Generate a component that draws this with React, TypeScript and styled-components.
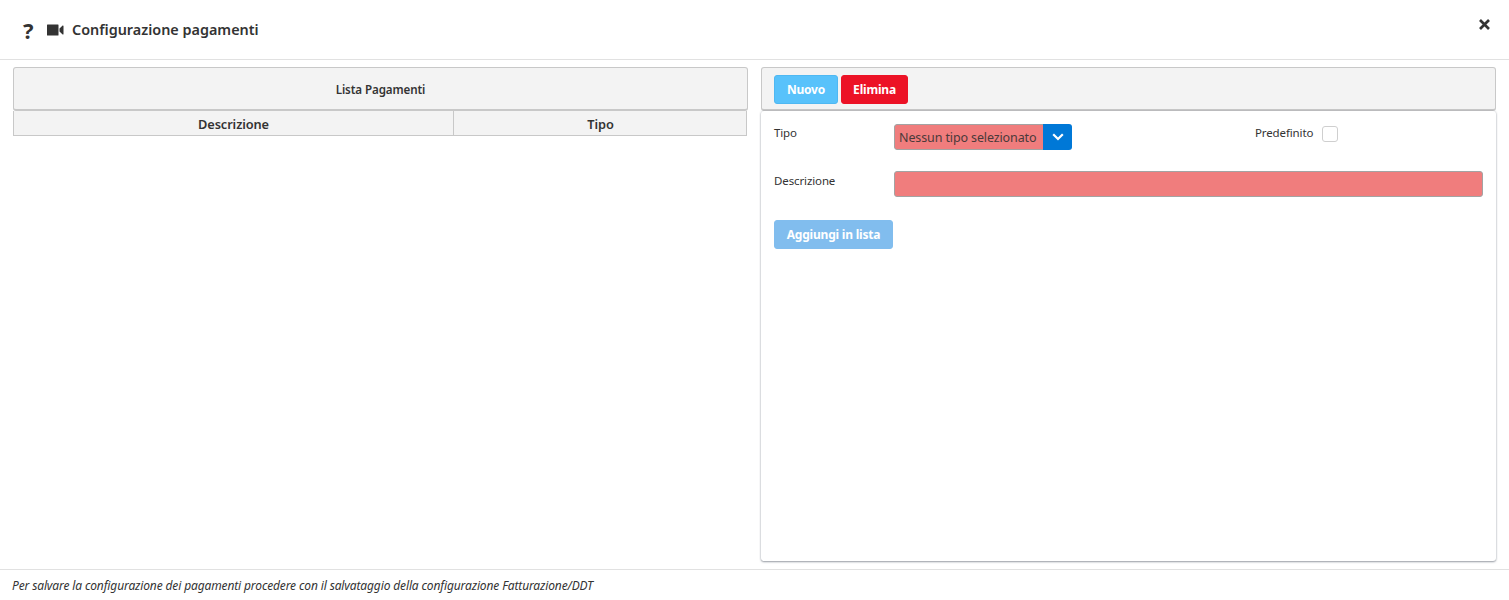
import React from "react";
import styled, { createGlobalStyle } from "styled-components";

const Global = createGlobalStyle`
  html, body { margin: 0; padding: 0; background: #fff; }
  body { font-family: "Noto Sans", "Open Sans", "Liberation Sans", sans-serif; color: #333; }
  * { box-sizing: border-box; }
`;

const Dialog = styled.div`
  width: 1509px;
  height: 600px;
  display: flex;
  flex-direction: column;
  background: #fff;
  overflow: hidden;
`;

const Header = styled.header`
  height: 60px;
  flex: none;
  border-bottom: 1px solid #e1e1e1;
  display: flex;
  align-items: flex-start;
  padding: 0 19px 0 22px;
`;

const HeaderIcon = styled.span`
  display: flex;
  align-items: center;
  color: #333;
`;

const HelpIcon = styled(HeaderIcon)`
  width: 25px;
  height: 60px;
  font-size: 22px;
  font-weight: 700;
  padding: 0 0 1px 1px;
`;

const VideoIcon = styled(HeaderIcon)`
  height: 60px;
  width: 25px;
`;

const Title = styled.h1`
  margin: 0;
  line-height: 59px;
  font-size: 14.4px;
  font-weight: 600;
  color: #333;
  flex: 1;
`;

const Close = styled.span`
  display: flex;
  margin-top: 19px;
  color: #333;
`;

const Body = styled.main`
  flex: 1;
  min-height: 0;
  display: grid;
  grid-template-columns: 735px 735px;
  column-gap: 13px;
  padding: 7px 13px 8px;
`;

const Column = styled.section`
  display: flex;
  flex-direction: column;
  min-height: 0;
`;

const Bar = styled.div`
  height: 44px;
  flex: none;
  background: #f3f3f3;
  border: 1px solid #c8c8c8;
  border-bottom-width: 2px;
  border-radius: 3px;
`;

const TitleBar = styled(Bar)`
  display: flex;
  align-items: center;
  justify-content: center;
  font-size: 11.6px;
  font-weight: 600;
  letter-spacing: -0.1px;
  padding-top: 1px;
`;

const ToolBar = styled(Bar)`
  display: flex;
  align-items: flex-start;
  gap: 3px;
  padding: 7px 12px 0;
`;

const Grid = styled.div`
  display: grid;
  grid-template-columns: 440px 293px;
  height: 25px;
  margin-right: 1px;
  background: #f3f3f3;
  border: 1px solid #c8c8c8;
  border-top: 0;
`;

const HeadCell = styled.div<{ $divider?: boolean }>`
  display: flex;
  align-items: center;
  justify-content: center;
  font-size: 12.8px;
  font-weight: 600;
  letter-spacing: -0.1px;
  color: #333;
  padding-top: 1px;
  border-right: ${(p) => (p.$divider ? "1px solid #c8c8c8" : "0")};
`;

const Button = styled.button<{ $bg: string; $w: number; $border?: string }>`
  width: ${(p) => p.$w}px;
  height: 29px;
  padding: 0;
  border: 1px solid ${(p) => p.$border ?? p.$bg};
  border-radius: 3px;
  background: ${(p) => p.$bg};
  color: #fff;
  font-family: inherit;
  font-size: 12px;
  font-weight: 700;
  letter-spacing: -0.2px;
`;

const Card = styled.div`
  flex: 1;
  min-height: 0;
  background: #fff;
  border-radius: 3px;
  box-shadow: 0 1px 2px 0 rgba(60, 70, 85, 0.5), 0 0 2px 0 rgba(60, 70, 85, 0.2);
  padding: 10px 13px 0 13px;
  display: flex;
  flex-direction: column;
`;

const FieldRow = styled.div<{ $h: number }>`
  display: flex;
  align-items: flex-start;
  height: ${(p) => p.$h}px;
`;

const Label = styled.label<{ $w: number }>`
  width: ${(p) => p.$w}px;
  flex: none;
  font-size: 11.5px;
  line-height: 16px;
  letter-spacing: -0.12px;
  color: #333;
  margin-top: 4px;
`;

const SelectBox = styled.div`
  width: 178px;
  height: 26px;
  margin-top: 3px;
  display: flex;
  border-radius: 3px;
  overflow: hidden;
  flex: none;
`;

const SelectValue = styled.div`
  flex: 1;
  background: #f07d7d;
  border: 1px solid #a3a3a3;
  border-right: 0;
  border-radius: 3px 0 0 3px;
  font-size: 12.5px;
  line-height: 26px;
  padding-left: 4px;
  letter-spacing: -0.12px;
  color: #4a3a3a;
  white-space: nowrap;
  overflow: hidden;
`;

const SelectArrow = styled.div`
  width: 29px;
  flex: none;
  background: #0078d7;
  color: #fff;
  display: flex;
  align-items: center;
  justify-content: center;
`;

const SelectSpacer = styled.div`
  width: 183px;
  flex: none;
`;

const Check = styled.span`
  width: 16px;
  height: 16px;
  flex: none;
  margin: 5px 0 0 9px;
  border: 1px solid #cfcfcf;
  border-radius: 3px;
  background: #fff;
`;

const TextInput = styled.div`
  flex: 1;
  height: 26px;
  margin-top: 2px;
  background: #f07d7d;
  border: 1px solid #a3a3a3;
  border-radius: 3px;
`;

const AddRow = styled.div`
  margin-top: 2px;
  display: flex;
`;

const Footer = styled.footer`
  height: 31px;
  flex: none;
  border-top: 1px solid #e1e1e1;
  padding: 0 12px;
  font-size: 12px;
  line-height: 31px;
  font-style: italic;
  letter-spacing: -0.13px;
  color: #333;
`;

export default function App() {
  return (
    <Dialog>
      <Global />
      <Header>
        <HelpIcon>?</HelpIcon>
        <VideoIcon>
          <svg width="17" height="12" viewBox="0 0 17 12" fill="currentColor">
            <rect x="0" y="0.5" width="11.5" height="11" rx="0.5" />
            <path d="M12.5 4.5 15.6 1.6c.4-.4.9-.1.9.5v7.8c0 .6-.5.9-.9.5L12.5 7.5z" />
          </svg>
        </VideoIcon>
        <Title>Configurazione pagamenti</Title>
        <Close>
          <svg width="11" height="11" viewBox="0 0 11 11" stroke="currentColor" strokeWidth="2.7" fill="none">
            <path d="M1 1 10 10M10 1 1 10" />
          </svg>
        </Close>
      </Header>
      <Body>
        <Column>
          <TitleBar>Lista Pagamenti</TitleBar>
          <Grid>
            <HeadCell $divider>Descrizione</HeadCell>
            <HeadCell>Tipo</HeadCell>
          </Grid>
        </Column>
        <Column>
          <ToolBar>
            <Button $bg="#58c2fb" $w={64} $border="#4fb8f2">Nuovo</Button>
            <Button $bg="#ec1226" $w={67}>Elimina</Button>
          </ToolBar>
          <Card>
            <FieldRow $h={48}>
              <Label $w={120}>Tipo</Label>
              <SelectBox>
                <SelectValue>Nessun tipo selezionato</SelectValue>
                <SelectArrow>
                  <svg width="12" height="8" viewBox="0 0 12 8" fill="none" stroke="currentColor" strokeWidth="2.2">
                    <path d="M1.2 1.2 6 6l4.8-4.8" />
                  </svg>
                </SelectArrow>
              </SelectBox>
              <SelectSpacer />
              <Label $w={58}>Predefinito</Label>
              <Check />
            </FieldRow>
            <FieldRow $h={49}>
              <Label $w={120}>Descrizione</Label>
              <TextInput />
            </FieldRow>
            <AddRow>
              <Button $bg="#81bdee" $w={119}>Aggiungi in lista</Button>
            </AddRow>
          </Card>
        </Column>
      </Body>
      <Footer>Per salvare la configurazione dei pagamenti procedere con il salvataggio della configurazione Fatturazione/DDT</Footer>
    </Dialog>
  );
}
